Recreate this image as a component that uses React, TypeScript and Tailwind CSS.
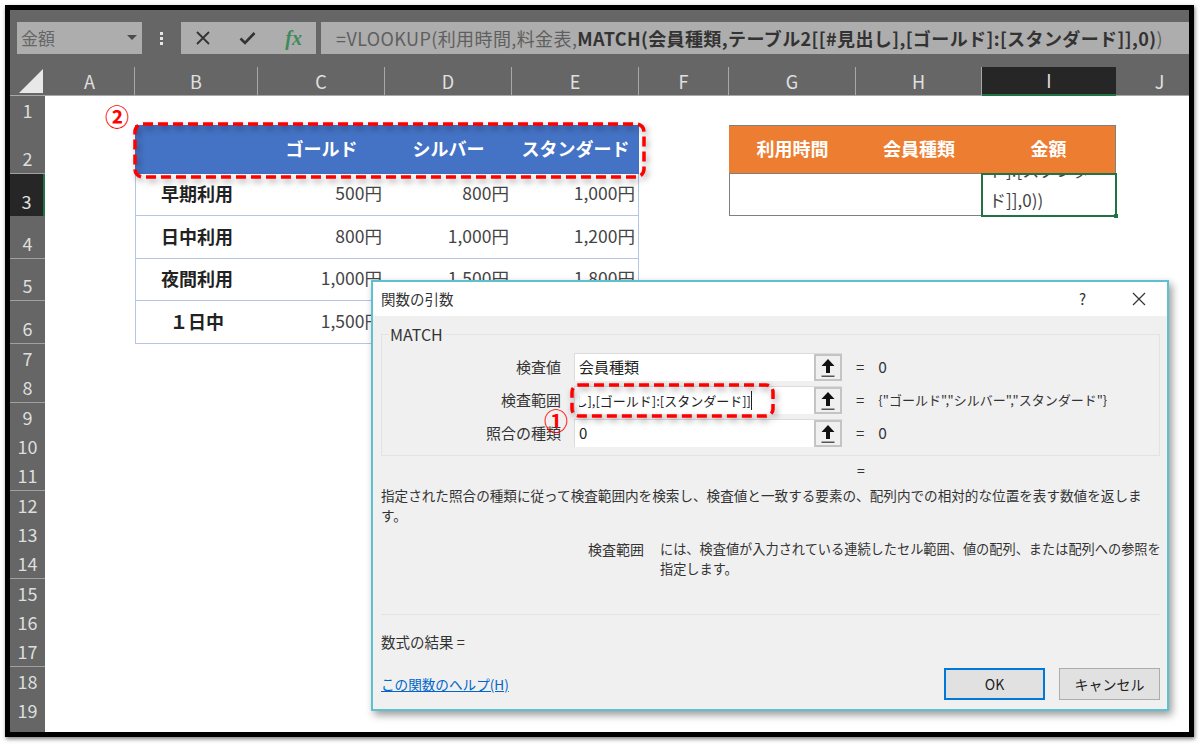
import type { ReactNode } from "react";

const cols = "grid grid-cols-[35px_90px_123px_127px_127px_127px_90px_127px_126px_134px_88px]";
const font = { fontFamily: '"Noto Sans CJK JP", "Noto Sans", sans-serif' };

const columns = ["A", "B", "C", "D", "E", "F", "G", "H", "I", "J"];

const prices = [
  { n: 3, h: "h-[42px]", label: "早期利用", v: ["500円", "800円", "1,000円"] },
  { n: 4, h: "h-[43px]", label: "日中利用", v: ["800円", "1,000円", "1,200円"] },
  { n: 5, h: "h-[42px]", label: "夜間利用", v: ["1,000円", "1,500円", "1,800円"] },
  { n: 6, h: "h-[43px]", label: "１日中", v: ["1,500円", "2,000円", "2,500円"] },
];

function RowHead({ n, active }: { n?: number; active?: boolean }) {
  return (
    <div
      className={
        active
          ? "flex items-end justify-center bg-[#262626] border-r-2 border-[#217346] text-[18px] leading-[29px] text-[#e0e0e0]"
          : "flex items-end justify-center bg-[#666666] border-b border-[#a0a0a0] text-[18px] leading-[29px] text-[#dedede]"
      }
    >
      {n}
    </div>
  );
}

function UpButton() {
  return (
    <div className="flex w-[28px] shrink-0 items-center justify-center border-2 border-[#c4c4c4] bg-[#f0f0f0]">
      <svg width="16" height="20" viewBox="0 0 16 20">
        <path d="M8 1 L14.5 8 H10 V15 H6 V8 H1.5 Z" fill="#111" />
        <rect x="1.5" y="17.5" width="13" height="1.5" fill="#555" />
      </svg>
    </div>
  );
}

function ArgRow({ label, value, valueClass, children }: { label: string; value: string; valueClass: string; children: ReactNode }) {
  return (
    <div className="flex h-[28px] items-stretch">
      <div className="flex w-[179px] items-center justify-end text-[15px] text-[#333]">{label}</div>
      <div className="ml-[13px] flex w-[268px] border-l border-t border-[#dcdcdc] bg-white">
        <div className="flex min-w-0 flex-1 items-center px-[4px] text-[15px] text-[#222]">{children}</div>
        <UpButton />
      </div>
      <div className="ml-[14px] flex items-center gap-[14px] whitespace-nowrap text-[#333]">
        <span className="text-[15px]">=</span>
        <span className={valueClass}>{value}</span>
      </div>
    </div>
  );
}

function DashedBox({ className, w, h, r }: { className: string; w: number; h: number; r: number }) {
  return (
    <svg className={className} width={w} height={h} viewBox={`0 0 ${w} ${h}`}>
      <rect x="2" y="2" width={w - 4} height={h - 4} rx={r} fill="none" stroke="#ff0000" strokeWidth="3.5" strokeDasharray="10 5" />
    </svg>
  );
}

export default function App() {
  return (
    <div className="h-[744px] w-[1200px] bg-white pl-[5px] pr-[5px] pt-[5px]" style={font}>
      <div className="relative h-[732px] w-[1189px] overflow-hidden border-[5px] border-black shadow-[1px_2px_4px_rgba(0,0,0,0.5)]">
        {/* formula bar */}
        <div className="flex h-[57px] items-start gap-[5px] bg-[#666666] pl-[7px] pt-[12px]">
          <div className="flex h-[32px] w-[125px] items-center justify-between bg-[#adadad] pl-[4px] pr-[3px] text-[17px] text-[#666]">
            <span>金額</span>
            <svg width="14" height="8" viewBox="0 0 14 8">
              <path d="M2 1 H12 L7 6 Z" fill="#4a4a4a" />
            </svg>
          </div>
          <div className="flex h-[32px] w-[29px] flex-col items-center justify-center gap-[2px]">
            <span className="h-[3px] w-[3px] bg-[#e6e6e6]" />
            <span className="h-[3px] w-[3px] bg-[#e6e6e6]" />
            <span className="h-[3px] w-[3px] bg-[#e6e6e6]" />
          </div>
          <div className="flex h-[32px] w-[135px] items-center justify-between bg-[#adadad] pl-[15px] pr-[14px]">
            <svg width="14" height="14" viewBox="0 0 14 14">
              <path d="M1 1 L13 13 M13 1 L1 13" stroke="#333" strokeWidth="1.8" fill="none" />
            </svg>
            <svg width="17" height="14" viewBox="0 0 17 14" className="ml-[12px]">
              <path d="M1.5 7.5 L6 12 L15.5 2" stroke="#333" strokeWidth="2.6" fill="none" />
            </svg>
            <span className="ml-[12px] font-['Liberation_Serif',serif] text-[20px] font-bold italic leading-none text-[#3f8a5c]">fx</span>
          </div>
          <div className="flex h-[32px] flex-1 items-center whitespace-nowrap bg-[#adadad] pl-[15px] text-[18px] tracking-[0.4px] text-[#5f5f5f]">
            <span>=VLOOKUP(利用時間,料金表,</span>
            <span className="font-bold text-[#333]">MATCH(会員種類,テーブル2[[#見出し],[ゴールド]:[スタンダード]],0)</span>
            <span>)</span>
          </div>
        </div>

        {/* column headers */}
        <div className={`${cols} h-[29px] bg-[#666666]`}>
          <div className="flex items-end justify-end border-b border-[#a8a8a8] pb-[2px] pr-[2px]">
            <svg width="24" height="24" viewBox="0 0 24 24">
              <path d="M24 0 V24 H0 Z" fill="#e8e8e8" />
            </svg>
          </div>
          {columns.map((c) => (
            <div
              key={c}
              className={
                c === "I"
                  ? "flex items-center justify-center border-b-2 border-[#217346] bg-[#262626] text-[18px] text-[#e0e0e0]"
                  : "flex items-center justify-center border-b border-r border-[#a8a8a8] text-[18px] text-[#e0e0e0]"
              }
            >
              {c}
            </div>
          ))}
        </div>

        {/* sheet */}
        <div className="bg-white">
          <div className={`${cols} h-[29px]`}>
            <RowHead n={1} />
          </div>

          <div className={`${cols} h-[49px]`}>
            <RowHead n={2} />
            <div />
            <div className="bg-[#4472c4]" />
            {["ゴールド", "シルバー", "スタンダード"].map((t) => (
              <div key={t} className="flex items-center justify-center bg-[#4472c4] pb-[2px] text-[18px] font-bold text-white">
                {t}
              </div>
            ))}
            <div />
            {["利用時間", "会員種類", "金額"].map((t) => (
              <div key={t} className="flex items-center justify-center border-y border-[#7f7f7f] bg-[#ed7d31] pb-[3px] text-[18px] font-bold text-white first:border-l last:border-r">
                {t}
              </div>
            ))}
          </div>

          {prices.map((r) => (
            <div key={r.n} className={`${cols} ${r.h}`}>
              <RowHead n={r.n} active={r.n === 3} />
              <div />
              <div className="flex items-center justify-center border-b border-l border-[#b4c6e7] pb-[2px] text-[18px] font-bold text-[#222]">
                {r.label}
              </div>
              {r.v.map((v, i) => (
                <div
                  key={i}
                  className={
                    i === 2
                      ? "flex items-center justify-end border-b border-r border-[#b4c6e7] pb-[2px] pr-[3px] text-[17.5px] text-[#444]"
                      : "flex items-center justify-end border-b border-[#b4c6e7] pb-[2px] pr-[3px] text-[17.5px] text-[#444]"
                  }
                >
                  {v}
                </div>
              ))}
              {r.n === 3 && (
                <>
                  <div />
                  <div className="border-b border-l border-[#7f7f7f]" />
                  <div className="border-b border-[#7f7f7f]" />
                  <div className="relative">
                    <div className="absolute -inset-px flex flex-col justify-end overflow-hidden border-2 border-[#217346] bg-white px-[6px] text-[17px] leading-[30px] text-[#444]">
                      <div className="whitespace-nowrap">ド]:[スタンダー</div>
                      <div className="whitespace-nowrap">ド]],0))</div>
                    </div>
                    <div className="absolute -bottom-[2px] -right-[2px] h-[4px] w-[4px] bg-[#217346]" />
                  </div>
                </>
              )}
            </div>
          ))}

          {[7, 8, 9, 10, 11, 12, 13, 14, 15, 16, 17, 18, 19].map((n) => (
            <div key={n} className={`${cols} h-[29.33px]`}>
              <RowHead n={n} />
            </div>
          ))}
          <div className={`${cols} h-[29.33px]`}>
            <RowHead />
          </div>
        </div>

        {/* annotations */}
        <DashedBox className="absolute left-[123px] top-[112px] drop-shadow-[2px_3px_3px_rgba(0,0,0,0.4)]" w={513} h={57} r={8} />
        <div className="absolute left-[95px] top-[91px] text-[24px] font-bold leading-[30px] text-[#ff0000]">②</div>

        {/* dialog */}
        <div className="absolute left-[361px] top-[270px] flex h-[431px] w-[798px] flex-col border-2 border-[#5fc0d0] bg-[#f0f0f0] shadow-[3px_4px_8px_rgba(0,0,0,0.4)]">
          <div className="flex h-[34px] shrink-0 items-center justify-between bg-white pl-[8px] pr-[21px] text-[14.5px] text-[#333]">
            <span>関数の引数</span>
            <div className="flex items-center gap-[46px]">
              <span className="text-[15px]">?</span>
              <svg width="14" height="14" viewBox="0 0 14 14">
                <path d="M1 1 L13 13 M13 1 L1 13" stroke="#333" strokeWidth="1.2" fill="none" />
              </svg>
            </div>
          </div>

          <div className="flex flex-1 flex-col pb-[9px] pl-[8px] pr-[7px]">
            <fieldset className="mt-[8px] flex h-[132px] flex-col gap-[5px] border border-[#e3e3e3] pt-[9px]">
              <legend className="ml-[7px] px-[1px] text-[16px] leading-[20px] text-[#333]">MATCH</legend>
              <ArgRow label="検査値" value="0" valueClass="text-[15.5px]">会員種類</ArgRow>
              <ArgRow label="検査範囲" value={'{"ゴールド","シルバー","スタンダード"}'} valueClass="text-[13px]">
                <div className="flex w-[173px] justify-end overflow-hidden whitespace-nowrap border-r border-[#222] text-[13px]">
                  #見出し],[ゴールド]:[スタンダード]]
                </div>
              </ArgRow>
              <ArgRow label="照合の種類" value="0" valueClass="text-[15.5px]">0</ArgRow>
            </fieldset>

            <div className="flex h-[29px] shrink-0 items-center pl-[476px] text-[14px] text-[#333]">=</div>
            <p className="whitespace-nowrap text-[13.6px] leading-[20px] text-[#333]">
              指定された照合の種類に従って検査範囲内を検索し、検査値と一致する要素の、配列内での相対的な位置を表す数値を返しま
              <br />
              す。
            </p>
            <div className="mt-[14px] flex leading-[20px] text-[#333]">
              <span className="ml-[207px] w-[72px] shrink-0 text-[14px]">検査範囲</span>
              <p className="whitespace-nowrap text-[13.2px]">
                には、検査値が入力されている連続したセル範囲、値の配列、または配列への参照を
                <br />
                指定します。
              </p>
            </div>
            <div className="mt-[35px] h-px shrink-0 bg-[#e3e3e3]" />
            <div className="mt-[17px] text-[14.5px] leading-[20px] text-[#333]">数式の結果 =</div>

            <div className="mt-auto flex items-center justify-between">
              <a className="text-[13.6px] text-[#0066cc] underline">この関数のヘルプ(H)</a>
              <div className="flex gap-[14px]">
                <div className="flex h-[32px] w-[101px] items-center justify-center border-2 border-[#0078d7] bg-[#e1e1e1] text-[14px] text-[#222]">OK</div>
                <div className="flex h-[32px] w-[101px] items-center justify-center border border-[#adadad] bg-[#e1e1e1] text-[14px] text-[#222]">キャンセル</div>
              </div>
            </div>
          </div>
        </div>

        <DashedBox className="absolute left-[560px] top-[373px] drop-shadow-[2px_3px_3px_rgba(0,0,0,0.4)]" w={205} h={35} r={7} />
        <div className="absolute left-[534px] top-[395px] text-[24px] font-bold leading-[30px] text-[#ff0000]">①</div>
      </div>
    </div>
  );
}
